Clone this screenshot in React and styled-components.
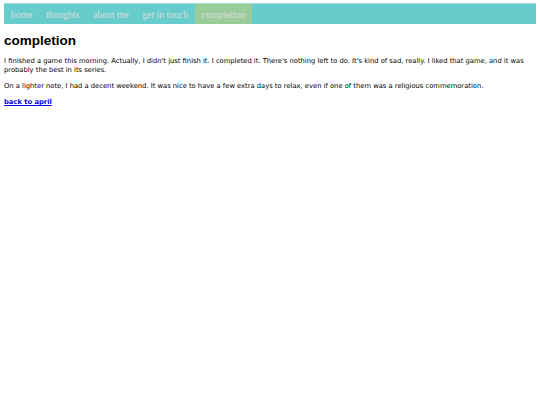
import React from 'react';
import styled, { createGlobalStyle } from 'styled-components';

const GlobalStyle = createGlobalStyle`
  html, body {
    background: #ffffff;
  }
  body {
    margin: 3px 4px 4px;
    font-family: "DejaVu Sans", sans-serif;
    font-size: 6.75px;
    color: #000000;
  }
`;

const Nav = styled.nav`
  background: #66cccc;
  border-top: 1px solid #99dddd;
`;

const NavList = styled.ul`
  display: flex;
  list-style: none;
  margin: 0;
  padding: 0;
`;

const NavItem = styled.li`
  background: ${({ active }) => (active ? '#99cc99' : 'transparent')};
`;

const NavLink = styled.a`
  display: block;
  padding: 4.5px 6.8px 4.5px;
  font-family: "Liberation Serif", serif;
  font-size: 9.7px;
  line-height: 11px;
  color: #dddddd;
  text-decoration: none;
`;

const Title = styled.h1`
  font-family: "Liberation Sans", Arial, sans-serif;
  font-size: 13.5px;
  font-weight: bold;
  margin: 9px 0 9px;
`;

const Paragraph = styled.p`
  margin: 7px 0;
  line-height: 9px;
`;

const BackLink = styled.a`
  font-weight: bold;
  color: #0000ee;
  text-decoration: underline;
`;

const links = [
  { label: 'home' },
  { label: 'thoughts' },
  { label: 'about me' },
  { label: 'get in touch' },
  { label: 'completion', active: true },
];

export default function App() {
  return (
    <>
      <GlobalStyle />
      <Nav>
        <NavList>
          {links.map((link) => (
            <NavItem key={link.label} active={link.active}>
              <NavLink href="#">{link.label}</NavLink>
            </NavItem>
          ))}
        </NavList>
      </Nav>
      <Title>completion</Title>
      <Paragraph>
        I finished a game this morning. Actually, I didn't just finish it. I completed it. There's nothing left to do. It's kind of sad, really. I liked that game, and it was probably the best in its series.
      </Paragraph>
      <Paragraph>
        On a lighter note, I had a decent weekend. It was nice to have a few extra days to relax, even if one of them was a religious commemoration.
      </Paragraph>
      <Paragraph>
        <BackLink href="#">back to april</BackLink>
      </Paragraph>
    </>
  );
}
